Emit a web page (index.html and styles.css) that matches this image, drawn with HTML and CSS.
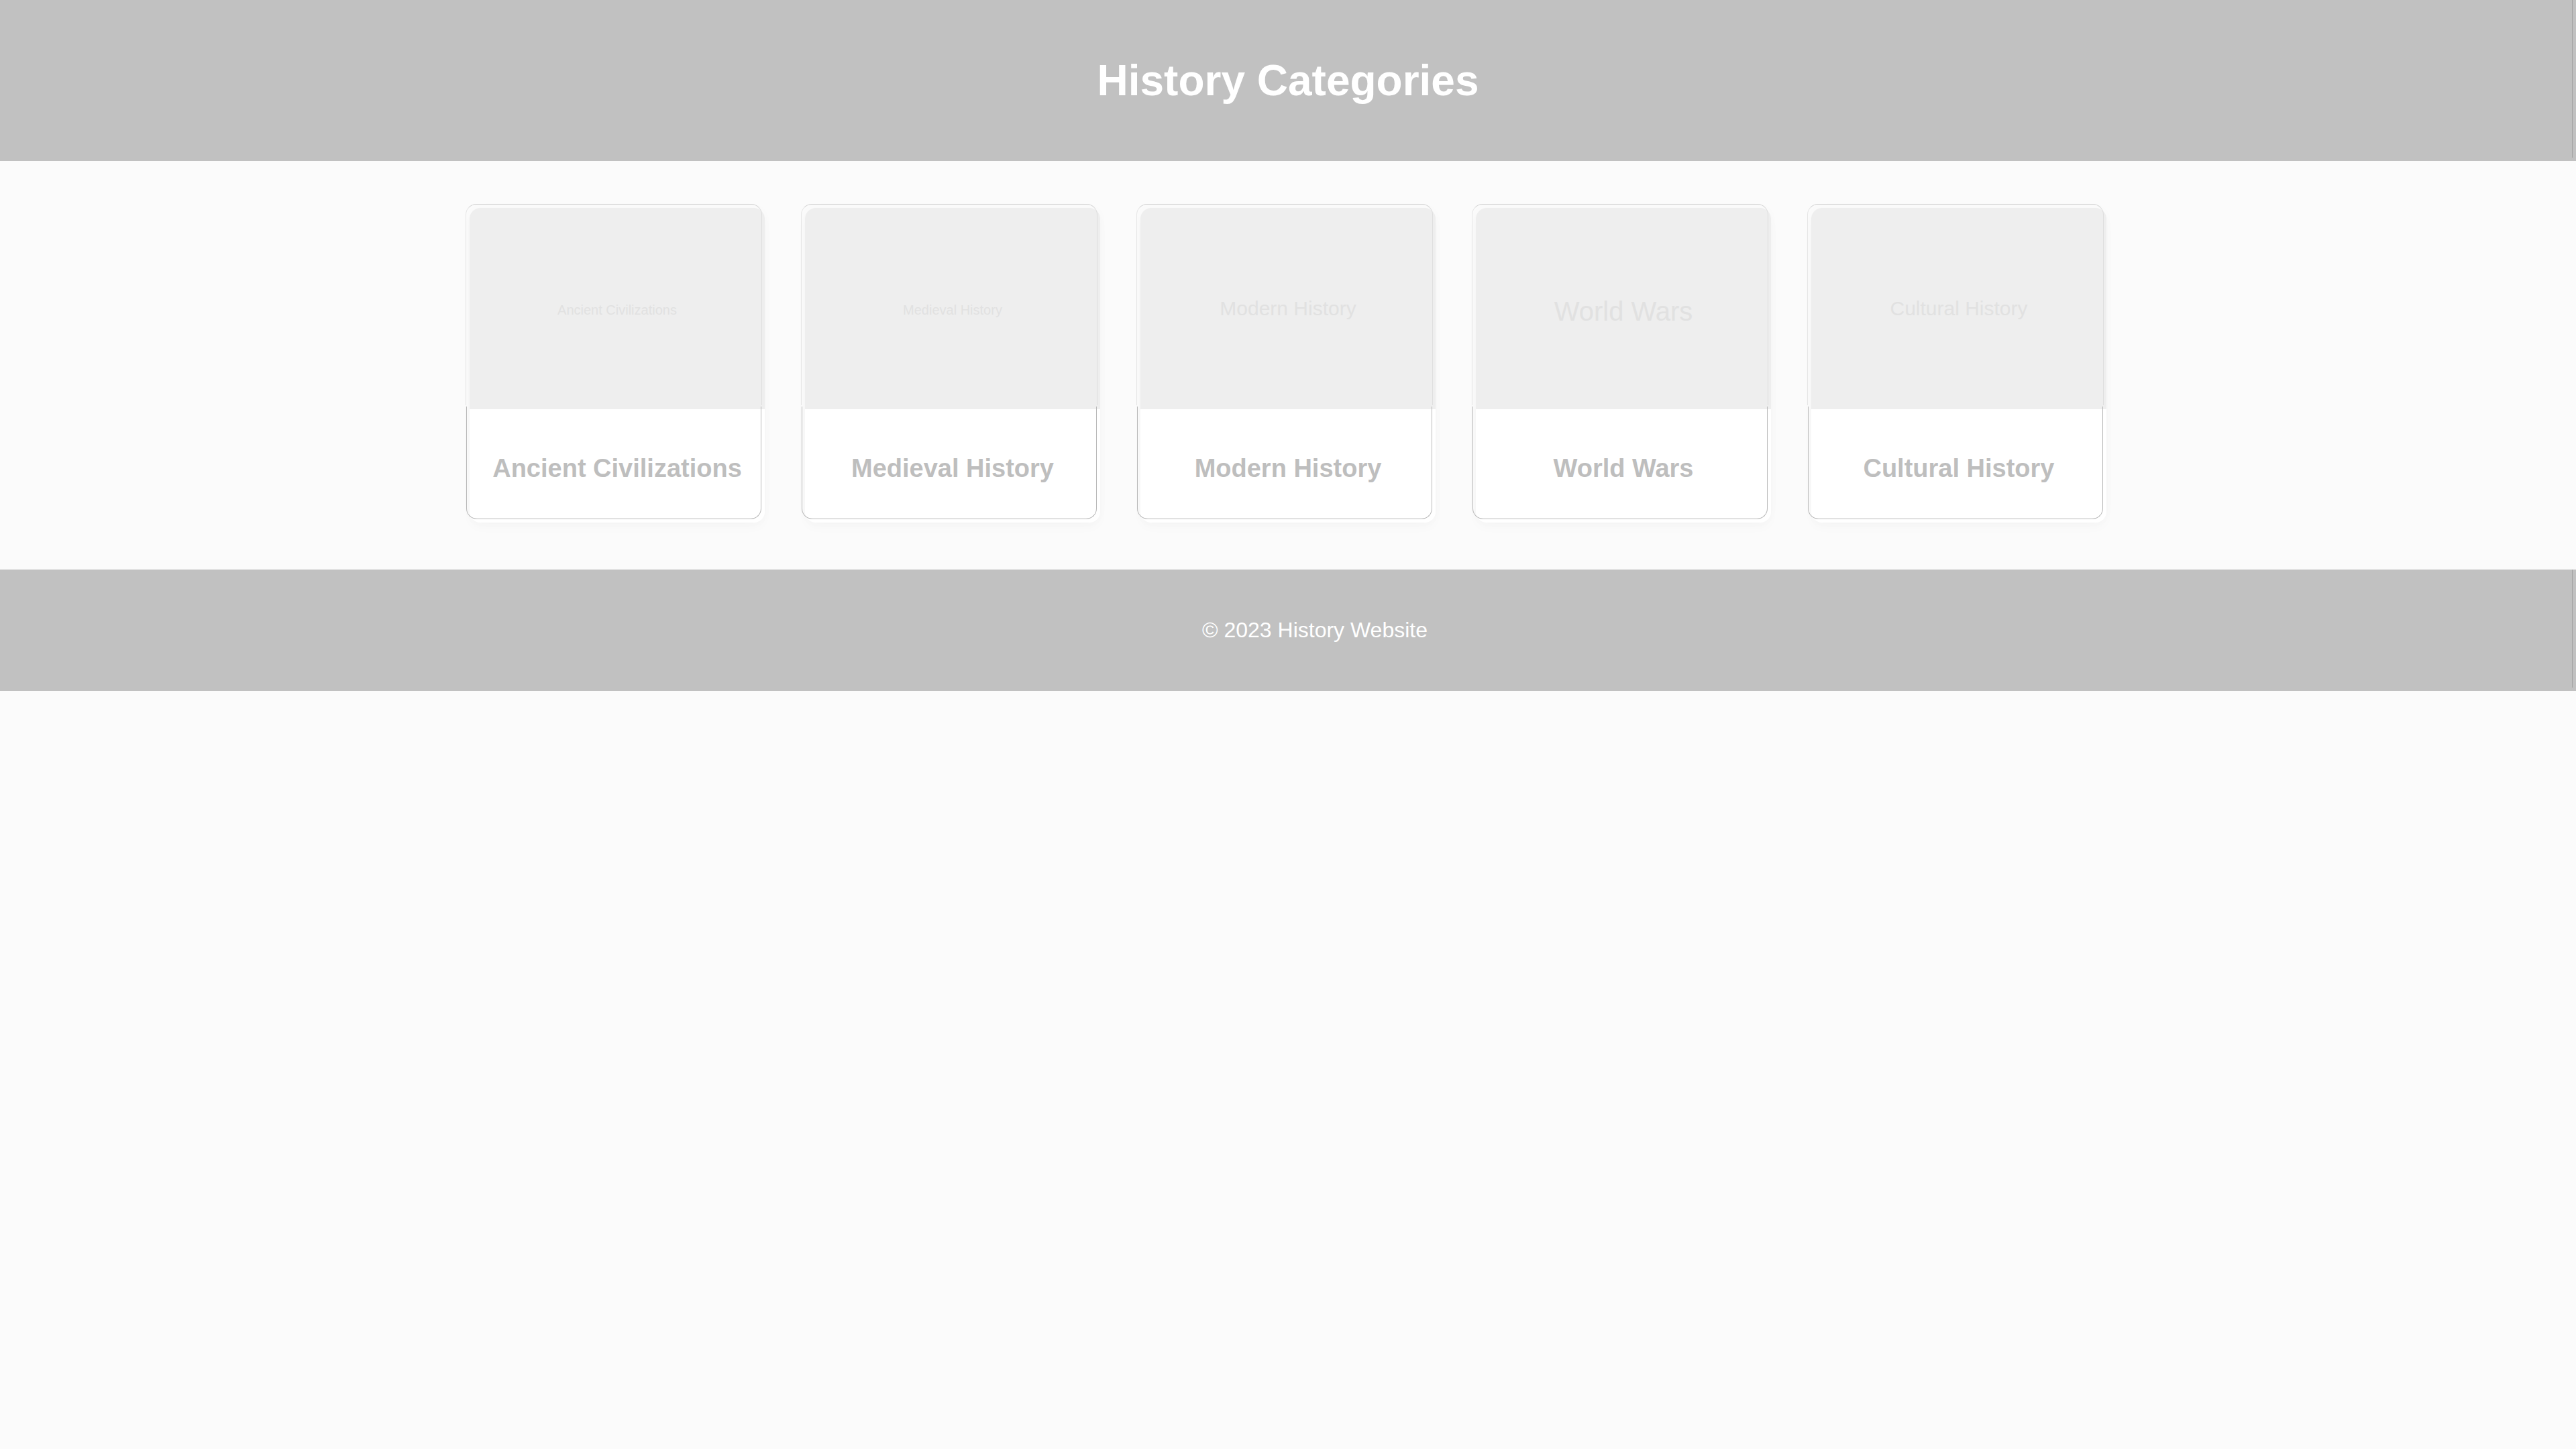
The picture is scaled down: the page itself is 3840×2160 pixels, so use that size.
FILE: index.html
```html
<!DOCTYPE html>
<html lang="en">
<head>
<meta charset="utf-8">
<title>History Categories</title>
<link rel="stylesheet" href="styles.css">
</head>
<body>
<header class="site-header">
  <h1 class="site-title">History Categories</h1>
</header>
<main class="categories">
  <article class="card">
    <div class="card-image card-image-small">Ancient Civilizations</div>
    <div class="card-body"><h2 class="card-title">Ancient Civilizations</h2></div>
  </article>
  <article class="card">
    <div class="card-image card-image-small">Medieval History</div>
    <div class="card-body"><h2 class="card-title">Medieval History</h2></div>
  </article>
  <article class="card">
    <div class="card-image">Modern History</div>
    <div class="card-body"><h2 class="card-title">Modern History</h2></div>
  </article>
  <article class="card">
    <div class="card-image card-image-large">World Wars</div>
    <div class="card-body"><h2 class="card-title">World Wars</h2></div>
  </article>
  <article class="card">
    <div class="card-image">Cultural History</div>
    <div class="card-body"><h2 class="card-title">Cultural History</h2></div>
  </article>
</main>
<footer class="site-footer">
  <p class="copyright">© 2023 History Website</p>
</footer>
</body>
</html>
```
FILE: styles.css
```css
* {
  box-sizing: border-box;
}

body {
  margin: 0;
  background: #fbfbfb;
  font-family: "Liberation Sans", Arial, sans-serif;
  font-size: 32px;
}

.site-header,
.site-footer {
  position: relative;
  background: #c1c1c1;
  color: #fff;
  text-align: center;
}

.site-header {
  padding: 40px;
}

.site-footer {
  padding: 40px 0 40px 80px;
}

/* fine rule just inside the right edge of both bars */
.site-header::after,
.site-footer::after {
  content: "";
  position: absolute;
  top: 0;
  right: 5px;
  bottom: 5px;
  width: 1px;
  background: #a3a3a3;
}

.site-title {
  margin: 43px 0;
  font-size: 64px;
  line-height: 74px;
}

.copyright {
  margin: 32px 0;
  line-height: 37px;
}

.categories {
  display: flex;
  flex-wrap: wrap;
  justify-content: center;
  gap: 60px;
  padding: 70px;
}

.card {
  width: 440px;
  background: #fff;
  border-radius: 16px;
  box-shadow: 0 8px 16px rgba(0, 0, 0, 0.02), 0 0 16px rgba(0, 0, 0, 0.02);
}

.card-image {
  position: relative;
  display: flex;
  align-items: center;
  justify-content: center;
  height: 300px;
  border-radius: 16px 16px 0 0;
  background: #eee;
  color: #e1e1e1;
  font-size: 30px;
}

.card-image-small {
  padding-top: 4px;
  font-size: 20px;
}

.card-image-large {
  padding-top: 8px;
  font-size: 40px;
}

.card-body {
  position: relative;
  padding: 34px 20px 26px;
}

.card-title {
  margin: 32px 0;
  color: #bebebe;
  font-size: 38px;
  line-height: 45px;
  text-align: center;
  white-space: nowrap;
}

/* offset hairline frame, paler round the image than round the caption */
.card-image::after,
.card-body::after {
  content: "";
  position: absolute;
  border: 1px solid #b8b8b8;
}

.card-image::after {
  inset: -6px 4px 6px -6px;
  border-color: #d2d2d2 #dedede transparent #e6e6e6;
  border-bottom: 0;
  border-radius: 16px 16px 0 0;
}

.card-body::after {
  inset: -4px 5px 5px -5px;
  border-top: 0;
  border-radius: 0 0 16px 16px;
}
```
